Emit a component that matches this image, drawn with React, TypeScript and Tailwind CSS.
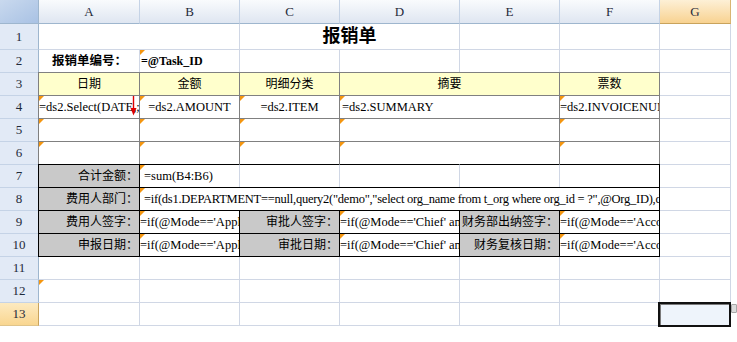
import React from "react";

const GRID = "border-r border-b border-[#d0d7e5] bg-white";
const GRAY_BOX = "relative z-10 -mt-px -ml-px border border-[#808080] overflow-hidden whitespace-nowrap flex items-center";
const BLACK_BOX = "relative z-10 -mt-px -ml-px border border-black overflow-hidden whitespace-nowrap flex items-center";

function Tri() {
  return (
    <span className="absolute left-0 top-0 w-0 h-0 border-t-[5px] border-r-[5px] border-t-[#f5960f] border-r-transparent" />
  );
}

function Cell({ className = "" }: { className?: string }) {
  return <div className={`${GRID} ${className}`} />;
}

function RowHead({ n, active = false }: { n: number; active?: boolean }) {
  return (
    <div
      className={`flex items-center justify-center border-r border-b text-[13px] text-[#1f2a3a] ${
        active
          ? "bg-gradient-to-b from-[#fdeac0] to-[#f9d690] border-r-[#c9a35c] border-b-[#e0c48a]"
          : "bg-[#e2eaf6] border-r-[#9eb6ce] border-b-[#c5d3e6]"
      }`}
    >
      {n}
    </div>
  );
}

function ColHead({ label, active = false }: { label: string; active?: boolean }) {
  return (
    <div
      className={`flex items-center justify-center border-r border-b text-[13px] text-[#1f2a3a] ${
        active
          ? "bg-gradient-to-b from-[#fdf0d6] to-[#f8d290] border-r-[#d9b572] border-b-[#c9a35c]"
          : "bg-gradient-to-b from-[#f9fbfd] to-[#dfe6f1] border-r-[#c5d3e6] border-b-[#9eb6ce]"
      }`}
    >
      {label}
    </div>
  );
}

function Label({ text }: { text: string }) {
  return <div className={`${BLACK_BOX} justify-end bg-[#c9c9c9] pr-px text-[12px]`}>{text}</div>;
}

function Formula({ text, className = "" }: { text: string; className?: string }) {
  return (
    <div className={`${BLACK_BOX} bg-white text-[12.5px] ${className}`}>
      <Tri />
      {text}
    </div>
  );
}

export default function App() {
  const cols = ["A", "B", "C", "D", "E", "F"];

  return (
    <div className="w-[737px] h-[342px] bg-white overflow-hidden font-['Liberation_Serif','Noto_Sans_CJK_SC',serif] text-black">
      <div className="grid grid-cols-[39px_101px_100px_100px_120px_100px_100px_71px] grid-rows-[24px_26px_repeat(12,23px)]">
        {/* 列头 */}
        <div className="bg-gradient-to-br from-[#c9d9ee] to-[#a9c2e4] border-r border-b border-[#9eb6ce]" />
        {cols.map(c => (
          <ColHead key={c} label={c} />
        ))}
        <ColHead label="G" active />

        {/* 1 */}
        <RowHead n={1} />
        <Cell className="col-span-2" />
        <div className={`${GRID} col-span-2 flex items-center justify-center text-[18px] font-bold`}>报销单</div>
        <Cell />
        <Cell />
        <Cell />

        {/* 2 */}
        <RowHead n={2} />
        <div className={`${GRID} flex items-center justify-center pl-px text-[12.5px] font-bold whitespace-nowrap`}>
          报销单编号：
        </div>
        <div className={`${GRID} relative flex items-center pl-px text-[12px] font-bold`}>
          <Tri />
          =@Task_ID
        </div>
        <Cell />
        <Cell />
        <Cell />
        <Cell />
        <Cell />

        {/* 3 */}
        <RowHead n={3} />
        {["日期", "金额", "明细分类"].map(t => (
          <div key={t} className={`${GRAY_BOX} justify-center bg-[#ffffcc] text-[12px]`}>{t}</div>
        ))}
        <div className={`${GRAY_BOX} col-span-2 justify-center bg-[#ffffcc] text-[12px]`}>摘要</div>
        <div className={`${GRAY_BOX} justify-center bg-[#ffffcc] text-[12px]`}>票数</div>
        <Cell />

        {/* 4 */}
        <RowHead n={4} />
        <div className={`${GRAY_BOX} bg-white text-[12.5px]`}>
          <Tri />
          =ds2.Select(DATE,;)
          <svg className="absolute right-[2px] top-0" width="7" height="20" viewBox="0 0 7 20">
            <line x1="3.5" y1="0" x2="3.5" y2="14" stroke="#e00000" strokeWidth="1.4" />
            <polygon points="0.5,12 6.5,12 3.5,19.5" fill="#e00000" />
          </svg>
        </div>
        <div className={`${GRAY_BOX} justify-center bg-white text-[12.5px]`}>
          <Tri />
          =ds2.AMOUNT
        </div>
        <div className={`${GRAY_BOX} justify-center bg-white text-[12.5px]`}>
          <Tri />
          =ds2.ITEM
        </div>
        <div className={`${GRAY_BOX} col-span-2 bg-white pl-[2px] text-[12.5px]`}>
          <Tri />
          =ds2.SUMMARY
        </div>
        <div className={`${GRAY_BOX} bg-white text-[12.5px]`}>
          <Tri />
          =ds2.INVOICENUMBER
        </div>
        <Cell />

        {/* 5, 6 */}
        {[5, 6].map(r => (
          <React.Fragment key={r}>
            <RowHead n={r} />
            <div className={`${GRAY_BOX} bg-white`}><Tri /></div>
            <div className={`${GRAY_BOX} bg-white`}><Tri /></div>
            <div className={`${GRAY_BOX} bg-white`}><Tri /></div>
            <div className={`${GRAY_BOX} col-span-2 bg-white`}><Tri /></div>
            <div className={`${GRAY_BOX} bg-white`}><Tri /></div>
            <Cell />
          </React.Fragment>
        ))}

        {/* 7 */}
        <RowHead n={7} />
        <Label text="合计金额：" />
        <div className="relative z-10 -mt-px -ml-px flex items-center border border-t-black border-b-black border-l-black border-r-[#d0d7e5] bg-white pl-[4px] text-[12.5px] whitespace-nowrap">
          <Tri />
          =sum(B4:B6)
        </div>
        <div className="relative z-10 -mt-px border-t border-b border-r border-t-black border-b-black border-r-[#d0d7e5] bg-white" />
        <div className="relative z-10 -mt-px border-t border-b border-r border-t-black border-b-black border-r-[#d0d7e5] bg-white" />
        <div className="relative z-10 -mt-px border-t border-b border-r border-t-black border-b-black border-r-[#d0d7e5] bg-white" />
        <div className="relative z-10 -mt-px border-t border-b border-r border-black bg-white" />
        <Cell />

        {/* 8 */}
        <RowHead n={8} />
        <Label text="费用人部门：" />
        <Formula
          className="col-span-5 pl-[4px] tracking-[-0.25px]"
          text={`=if(ds1.DEPARTMENT==null,query2("demo","select org_name from t_org where org_id = ?",@Org_ID),ds1.DEPARTMENT)`}
        />
        <Cell />

        {/* 9 */}
        <RowHead n={9} />
        <Label text="费用人签字：" />
        <Formula text="=if(@Mode=='Apply',@User,'')" />
        <Label text="审批人签字：" />
        <Formula text="=if(@Mode=='Chief' and @User!='')" />
        <Label text="财务部出纳签字：" />
        <Formula text="=if(@Mode=='Account',@User,'')" />
        <Cell />

        {/* 10 */}
        <RowHead n={10} />
        <Label text="申报日期：" />
        <Formula text="=if(@Mode=='Apply',today(),'')" />
        <Label text="审批日期：" />
        <Formula text="=if(@Mode=='Chief' and today())" />
        <Label text="财务复核日期：" />
        <Formula text="=if(@Mode=='Account',today(),'')" />
        <Cell />

        {/* 11 */}
        <RowHead n={11} />
        <Cell />
        <Cell />
        <Cell />
        <Cell />
        <Cell />
        <Cell />
        <Cell />

        {/* 12 */}
        <RowHead n={12} />
        <div className={`${GRID} relative`}>
          <Tri />
        </div>
        <Cell />
        <Cell />
        <Cell />
        <Cell />
        <Cell />
        <Cell />

        {/* 13 */}
        <RowHead n={13} active />
        <Cell />
        <Cell />
        <Cell />
        <Cell />
        <Cell />
        <Cell />
        <div className="relative z-20 -mt-px -ml-[2px] -mb-px border-2 border-[#111] bg-[#eef4fb] shadow-[inset_1px_1px_0_#7a7a7a]">
          <span className="absolute -right-[8px] top-0 h-[9px] w-[6px] rounded-[1px] border border-[#a8a8a8] bg-[#dcdcdc]" />
        </div>
      </div>
    </div>
  );
}
